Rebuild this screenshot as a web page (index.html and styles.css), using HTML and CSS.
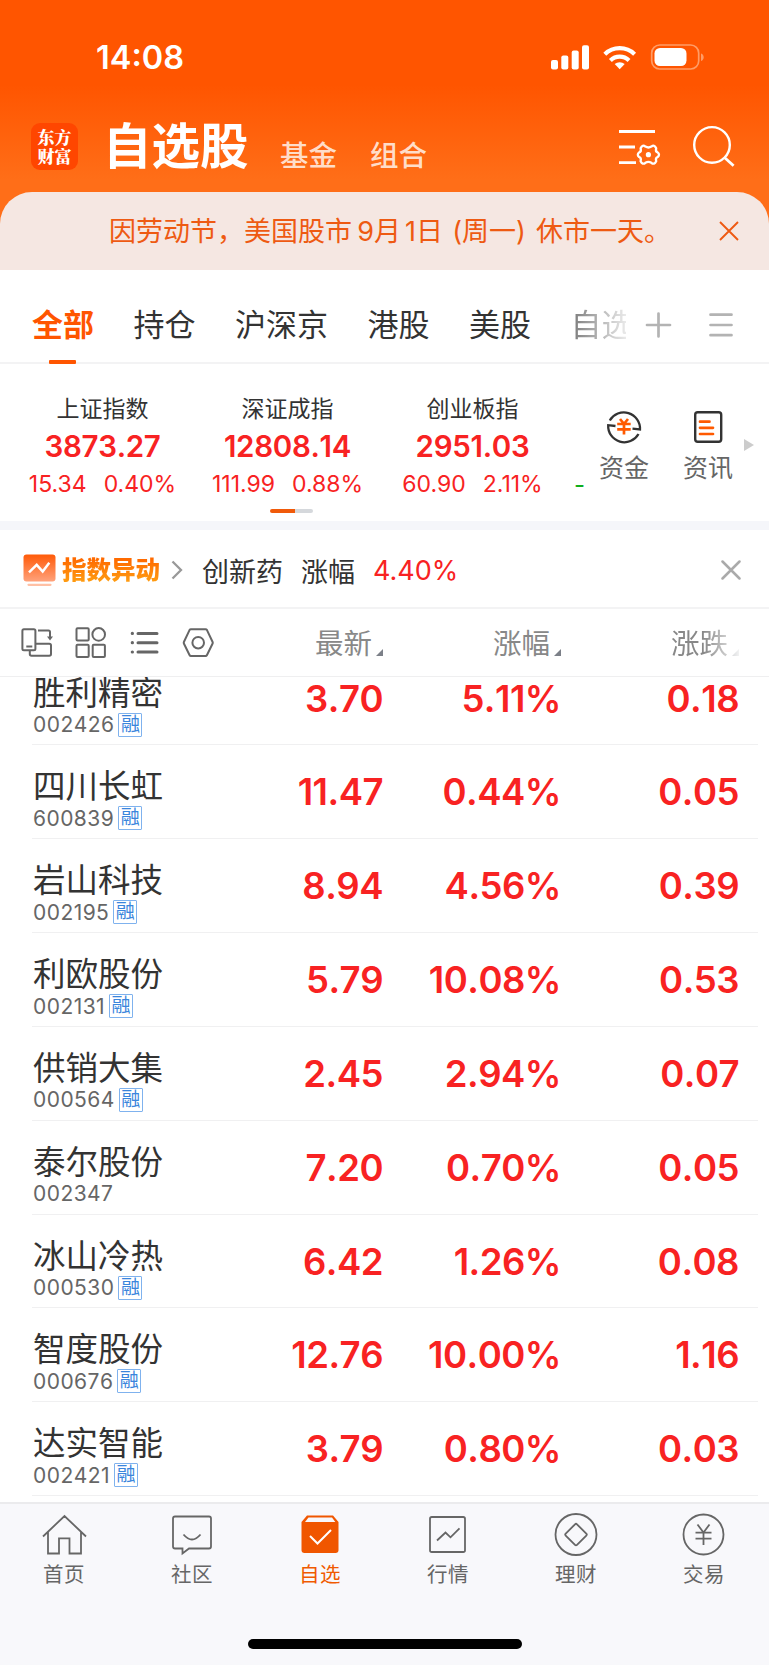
FILE: index.html
```
<!DOCTYPE html>
<html lang="zh-CN">
<head>
    <meta charset="UTF-8">
    <meta name="viewport" content="width=device-width, initial-scale=1.0">
    <title>自选股</title>
    <link rel="stylesheet" href="styles.css">
</head>
<body>
<div class="app">
    <header class="header">
        <div class="status">
            <span class="time">14:08</span>
            <svg class="status-icons" width="156" height="28" viewBox="0 0 156 28">
                <g fill="#fff">
                    <rect x="1" y="17" width="7" height="9.500" rx="2"/>
                    <rect x="11.300" y="12.500" width="7" height="14" rx="2"/>
                    <rect x="21.700" y="7.500" width="7" height="19" rx="2"/>
                    <rect x="32" y="2.200" width="7" height="24.300" rx="2"/>
                    <path d="M69.700 26.300l-5-5.200a7.500 7.500 0 0 1 10 0z"/>
                </g>
                <g fill="none" stroke="#fff" stroke-width="4.200">
                    <path d="M54.800 11.200a21.500 21.500 0 0 1 29.800 0"/>
                    <path d="M60.400 17.400a13.500 13.500 0 0 1 18.600 0"/>
                </g>
                <rect x="101.700" y="2" width="47" height="24" rx="8" fill="none" stroke="#ff9c66" stroke-width="1.700"/>
                <rect x="104.500" y="5" width="32" height="18" rx="5.500" fill="#fff"/>
                <path d="M151 10.500c3.600 1 3.600 6.500 0 7.500z" fill="#ff9c66"/>
            </svg>
        </div>
        <div class="title-bar">
            <div class="logo"><span>东方</span><span>财富</span></div>
            <h1>自选股</h1>
            <span class="sub sub-fund">基金</span>
            <span class="sub">组合</span>
            <svg class="title-icons" width="120" height="46" viewBox="0 0 120 46" fill="none" stroke="#fff">
                <path d="M2 8.500h36M2 24h16M2 39.700h17" stroke-width="2.800"/>
                <path d="M28.400 23.600Q31.400 25.400 34.400 23.600Q37.200 21.200 39.200 25.200Q38.200 28.600 40.600 29.400Q43.400 31.700 40.600 34Q38.200 34.800 39.200 38.200Q37.200 42.200 34.400 39.800Q31.400 38 28.400 39.800Q25.600 42.200 23.600 38.200Q24.600 34.800 22.200 34Q19.400 31.700 22.200 29.400Q24.600 28.600 23.600 25.200Q25.600 21.200 28.400 23.600Z" stroke-width="2.300" stroke-linejoin="round"/>
                <circle cx="31.400" cy="31.700" r="2.600" fill="#fff" stroke="none"/>
                <circle cx="95" cy="21.900" r="17.800" stroke-width="2.400"/>
                <path d="M107.200 34.300l9.400 8.500" stroke-width="2.800"/>
            </svg>
        </div>
    </header>

    <div class="notice">
        <p>因劳动节，美国股市<i class="n9">9</i>月<i class="n1">1</i>日<i class="lp">(</i>周一<i class="rp">)</i>休市一天。</p>
        <svg width="20" height="20" viewBox="0 0 20 20" stroke="#ee5a12" stroke-width="1.900"><path d="M1 1l18 18M19 1L1 19"/></svg>
    </div>

    <nav class="tabs">
        <span class="tab active">全部</span>
        <span class="tab">持仓</span>
        <span class="tab">沪深京</span>
        <span class="tab">港股</span>
        <span class="tab">美股</span>
        <span class="tab faded">自选</span>
        <svg width="90" height="26" viewBox="0 0 90 26" fill="none" stroke="#b3b3b3" stroke-width="2.700" stroke-linecap="round">
            <path d="M2 13h23M13.500 1.500v23M65.500 2.700h21M65.500 13h21M65.500 23.200h21"/>
        </svg>
    </nav>

    <section class="indices">
        <div class="index">
            <h3>上证指数</h3>
            <strong>3873.27</strong>
            <p><span>15.34</span><span>0.40%</span></p>
        </div>
        <div class="index">
            <h3>深证成指</h3>
            <strong>12808.14</strong>
            <p><span>111.99</span><span>0.88%</span></p>
        </div>
        <div class="index">
            <h3>创业板指</h3>
            <strong>2951.03</strong>
            <p><span>60.90</span><span>2.11%</span></p>
        </div>
        <div class="peek">-</div>
        <div class="tool">
            <svg width="38" height="38" viewBox="0 0 38 38" fill="none" stroke="#333" stroke-width="2.300">
                <path d="M4.800 12.500A16.200 16.200 0 0 1 35 21.500L27.500 20.700"/>
                <path d="M33.500 26A16.200 16.200 0 0 1 3.200 17.200L10.500 18"/>
                <path d="M15 11l3.700 4.500M23 11l-3.700 4.500M12.200 16h13.500M12.200 21.300h13.500M19 15.500v11" stroke="#ff5a00" stroke-width="2.700"/>
            </svg>
            <span>资金</span>
        </div>
        <div class="tool">
            <svg width="38" height="38" viewBox="0 0 38 38" fill="none" stroke="#333" stroke-width="2.400">
                <rect x="6.200" y="4.200" width="26" height="29.500" rx="2.500"/>
                <path d="M11 13.700h9.500M11 19.800h13M11 26h13" stroke="#ff5a00" stroke-width="2.700" stroke-linecap="round"/>
            </svg>
            <span>资讯</span>
        </div>
        <div class="more"></div>
        <div class="pager"></div>
    </section>

    <section class="alert">
        <svg class="alert-icon" width="34" height="34" viewBox="0 0 34 34">
            <defs>
                <linearGradient id="alertFill" x1="0" y1="0" x2="0" y2="1">
                    <stop offset="0" stop-color="#ff5a08"/>
                    <stop offset="1" stop-color="#ffa27c"/>
                </linearGradient>
            </defs>
            <rect x="1.500" y="1.500" width="32" height="27" rx="3" fill="url(#alertFill)"/>
            <path d="M7 19.300l7.700-7.500 6 6.700L27.300 9.800" fill="none" stroke="#fff" stroke-width="2.500"/>
            <path d="M6.500 31.800h22" stroke="#ffc0a4" stroke-width="2.200" stroke-linecap="round"/>
        </svg>
        <b>指数异动</b>
        <svg class="chevron" width="12" height="20" viewBox="0 0 12 20" fill="none" stroke="#999" stroke-width="2.300"><path d="M1.500 1.500L10 10l-8.500 8.500"/></svg>
        <span class="sector">创新药</span>
        <span class="label">涨幅</span>
        <span class="rate">4.40%</span>
        <svg class="close" width="20" height="20" viewBox="0 0 20 20" stroke="#aaa" stroke-width="2.500" stroke-linecap="round"><path d="M1.500 1.500l17 17M18.500 1.500l-17 17"/></svg>
    </section>

    <section class="thead">
        <svg width="194" height="34" viewBox="0 0 194 34" fill="none" stroke="#666" stroke-width="2">
            <rect x="2.400" y="3.300" width="13" height="21" rx="1.500"/>
            <path d="M6.300 20.500h6M18 4.500h10.500q1.500 0 1.500 1.500v6M9.800 25v3q0 1.700 1.700 1.700H29.300q1.700 0 1.700-1.700v-8.500q0-1.700-1.700-1.700H16"/>
            <path d="M27 10.500h6l-3 4z" fill="#666" stroke="none"/>
            <rect x="56.500" y="2.300" width="12.200" height="12.200" rx="1"/>
            <circle cx="78.700" cy="8.400" r="6.300"/>
            <rect x="56.500" y="18.700" width="12.200" height="12.200" rx="1"/>
            <rect x="72.700" y="18.700" width="12.200" height="12.200" rx="1"/>
            <path d="M118 7.400h19M118 16.700h19M118 26h19" stroke-width="3" stroke-linecap="round"/>
            <path d="M112.300 7.400h.1M112.300 16.700h.1M112.300 26h.1" stroke-width="3.200" stroke-linecap="round"/>
            <path d="M171 3.200h14.500q1 0 1.500.9l5.500 11.600q.500 1 0 2l-5.500 11.300q-.500 1-1.500 1H171q-1 0-1.500-1l-5.500-11.300q-.500-1 0-2l5.500-11.600q.500-.9 1.500-.9z"/>
            <circle cx="178.200" cy="16.700" r="5.800"/>
        </svg>
        <span class="th">最新</span>
        <span class="th">涨幅</span>
        <span class="th th-fade">涨跌</span>
    </section>

    <main class="list">
        <div class="row"><div class="stock"><h2>胜利精密</h2><p>002426<em>融</em></p></div><b>3.70</b><b>5.11%</b><b>0.18</b></div>
        <div class="row"><div class="stock"><h2>四川长虹</h2><p>600839<em>融</em></p></div><b>11.47</b><b>0.44%</b><b>0.05</b></div>
        <div class="row"><div class="stock"><h2>岩山科技</h2><p>002195<em>融</em></p></div><b>8.94</b><b>4.56%</b><b>0.39</b></div>
        <div class="row"><div class="stock"><h2>利欧股份</h2><p>002131<em>融</em></p></div><b>5.79</b><b>10.08%</b><b>0.53</b></div>
        <div class="row"><div class="stock"><h2>供销大集</h2><p>000564<em>融</em></p></div><b>2.45</b><b>2.94%</b><b>0.07</b></div>
        <div class="row"><div class="stock"><h2>泰尔股份</h2><p>002347</p></div><b>7.20</b><b>0.70%</b><b>0.05</b></div>
        <div class="row"><div class="stock"><h2>冰山冷热</h2><p>000530<em>融</em></p></div><b>6.42</b><b>1.26%</b><b>0.08</b></div>
        <div class="row"><div class="stock"><h2>智度股份</h2><p>000676<em>融</em></p></div><b>12.76</b><b>10.00%</b><b>1.16</b></div>
        <div class="row"><div class="stock"><h2>达实智能</h2><p>002421<em>融</em></p></div><b>3.79</b><b>0.80%</b><b>0.03</b></div>
    </main>

    <footer class="footer">
        <nav class="menu">
            <a class="item">
                <svg width="46" height="46" viewBox="0 0 46 46"><path d="M2 24.500L23.500 4 45 24.500M7 20v21.500h11V26.300h10.500v15.200H40V20"/></svg>
                <span>首页</span>
            </a>
            <a class="item">
                <svg width="46" height="46" viewBox="0 0 46 46"><path d="M6 4.500h34q2 0 2 2v28q0 2-2 2H20l-6.500 5v-5H6q-2 0-2-2v-28q0-2 2-2zM14.500 22.500q8.500 10 17 0"/></svg>
                <span>社区</span>
            </a>
            <a class="item active">
                <svg width="46" height="46" viewBox="0 0 46 46">
                    <path class="solid" d="M10 3.500h26l5.500 6.500v28q0 3-3 3h-31q-3 0-3-3V10z"/>
                    <path class="cut" d="M11.500 5.500h23.500l3.300 4.500H8z"/>
                    <path class="check" d="M13 24l7.500 7.500L34 18"/>
                </svg>
                <span>自选</span>
            </a>
            <a class="item">
                <svg width="46" height="46" viewBox="0 0 46 46"><rect x="5" y="5" width="35" height="35" rx="1.800"/><path d="M12 28.500l8.500-8 5 4.800 9-9"/></svg>
                <span>行情</span>
            </a>
            <a class="item">
                <svg width="46" height="46" viewBox="0 0 46 46"><circle cx="23" cy="22.500" r="20.500"/><path d="M22 12.300q1-1 2 0l9.300 9.300q1 1 0 2L24 32.900q-1 1-2 0l-9.300-9.300q-1-1 0-2z"/></svg>
                <span>理财</span>
            </a>
            <a class="item">
                <svg width="46" height="46" viewBox="0 0 46 46"><circle cx="22.500" cy="22.500" r="20"/><path d="M16.500 12.500l6 8 6-8M14.500 20.700h16M14.500 26.700h16M22.500 20.500V33"/></svg>
                <span>交易</span>
            </a>
        </nav>
        <div class="home-bar"></div>
    </footer>
</div>
</body>
</html>
```
FILE: styles.css
```
* {
    box-sizing: border-box;
    margin: 0;
    padding: 0;
}
body {
    font-family: Inter, "Noto Sans CJK SC", sans-serif;
    font-weight: 400;
    color: #333;
    background: #fff;
}
svg {
    display: block;
    flex: none;
}
.app {
    width: 769px;
    height: 1665px;
    display: flex;
    flex-direction: column;
    overflow: hidden;
    background: linear-gradient(#ff5500 0, #ff5500 85px, #ff6e18 180px, #ff6e18 240px, #fff 240px);
}

/* header */
.header {
    height: 192px;
    flex: none;
    color: #fff;
}
.status {
    height: 115px;
    display: flex;
    justify-content: space-between;
    padding: 43px 63px 0 96px;
}
.time {
    font-size: 32.500px;
    font-weight: 600;
    line-height: 30px;
}
.title-bar {
    height: 77px;
    display: flex;
    align-items: flex-start;
    padding-left: 31px;
}
.logo {
    width: 47px;
    height: 47px;
    flex: none;
    margin: 8px 26px 0 0;
    padding-top: 4px;
    border-radius: 9px;
    background: #ff4600;
    font-family: "Noto Serif CJK SC", "Noto Sans CJK SC", serif;
    font-weight: 900;
    font-size: 17px;
    text-align: center;
}
.logo span {
    display: block;
    line-height: 19px;
}
.title-bar h1 {
    padding-top: 1px;
    font-size: 48.500px;
    line-height: 62px;
    font-weight: 700;
    width: 177px;
    flex: none;
    margin-left: -1px;
}
.sub {
    width: 90px;
    flex: none;
    padding-top: 21px;
    font-size: 28.500px;
    line-height: 40px;
    font-weight: 500;
    color: #ffddc9;
}
.title-icons {
    margin: 8px 0 0 157px;
}

/* notice */
.notice {
    height: 78px;
    flex: none;
    display: flex;
    align-items: center;
    justify-content: space-between;
    padding: 0 30px 0 109px;
    border-radius: 32px 32px 0 0;
    background: #f5e7e2;
    color: #ee5a12;
}
.notice p {
    display: flex;
    padding-top: 2px;
    font-size: 27px;
    line-height: 40px;
}
.notice i {
    font-style: normal;
    text-align: right;
}
.n9 {
    width: 22px;
}
.n1 {
    width: 15px;
}
.lp {
    width: 19px;
}
.notice .rp {
    width: 20px;
    text-align: left;
}

/* tabs */
.tabs {
    height: 94px;
    flex: none;
    display: flex;
    align-items: center;
    padding: 18px 0 0 32px;
    background: #fff;
    border-bottom: 2px solid #f3f3f4;
}
.tab {
    position: relative;
    flex: none;
    margin-right: 39.500px;
    font-size: 31px;
    line-height: 44px;
    white-space: nowrap;
}
.tab.active {
    color: #ff5500;
    font-weight: 700;
}
.tab.active::after {
    content: "";
    position: absolute;
    left: 17px;
    bottom: -17px;
    width: 27px;
    height: 4px;
    border-radius: 1px;
    background: #ff5500;
}
.tab.faded {
    width: 55px;
    margin-right: 19px;
    overflow: hidden;
    -webkit-mask-image: linear-gradient(90deg, rgba(0, 0, 0, .65), rgba(0, 0, 0, .1));
    mask-image: linear-gradient(90deg, rgba(0, 0, 0, .65), rgba(0, 0, 0, .1));
}

/* indices */
.indices {
    position: relative;
    height: 166px;
    flex: none;
    display: flex;
    padding-left: 10px;
    background: #fff;
    border-bottom: 9px solid #f5f6fa;
}
.index {
    width: 185px;
    flex: none;
    padding-top: 28px;
    text-align: center;
    color: #f82222;
}
.index h3 {
    font-size: 23px;
    line-height: 34px;
    font-weight: 400;
    color: #333;
}
.index strong {
    display: block;
    font-size: 29.500px;
    line-height: 40px;
    font-weight: 600;
    font-kerning: none;
    letter-spacing: -0.300px;
}
.index p {
    display: flex;
    justify-content: center;
    gap: 17px;
    font-size: 23px;
    line-height: 37px;
}
.peek {
    width: 17px;
    flex: none;
    padding: 102px 0 0 9px;
    font-size: 24px;
    line-height: 37px;
    color: #0fae1c;
}
.tool {
    width: 84px;
    flex: none;
    margin-top: 44px;
    display: flex;
    flex-direction: column;
    align-items: center;
    font-size: 25px;
    color: #666;
}
.tool span {
    margin-top: 5px;
    line-height: 34px;
}
.more {
    margin: 75px 0 0 -6px;
    width: 10px;
    height: 12px;
    background: #ccc;
    clip-path: polygon(0 0, 100% 50%, 0 100%);
}
.pager {
    position: absolute;
    left: 270px;
    top: 145px;
    width: 43px;
    height: 4px;
    border-radius: 2px;
    background: linear-gradient(90deg, #f05a0a 25px, #d5d8dc 25px);
}

/* alert */
.alert {
    height: 79px;
    flex: none;
    display: flex;
    align-items: center;
    padding: 2px 28px 0 22px;
    background: #fff;
    border-bottom: 2px solid #f3f3f4;
    font-size: 27px;
}
.alert b {
    margin-left: 6px;
    width: 109px;
    font-size: 24.500px;
    font-weight: 900;
    line-height: 36px;
    background: linear-gradient(#ff6a00 20%, #ff9a10 80%);
    -webkit-background-clip: text;
    background-clip: text;
    color: transparent;
}
.alert span {
    padding-top: 1px;
}
.sector {
    margin-left: 19px;
}
.label {
    margin-left: 18px;
}
.rate {
    margin-left: 18px;
    color: #f82222;
}
.close {
    margin-left: auto;
}

/* table head */
.thead {
    height: 68px;
    flex: none;
    display: flex;
    align-items: center;
    padding-left: 20px;
    background: #fff;
    border-bottom: 1px solid #efeff0;
}
.th {
    width: 178px;
    display: flex;
    justify-content: flex-end;
    padding-top: 3px;
    font-size: 28.500px;
    line-height: 40px;
    color: #888;
}
.thead .th:nth-of-type(1) {
    width: 169px;
}
.th::after {
    content: "";
    width: 7px;
    height: 7px;
    margin: 25px 0 0 4px;
    background: #7c8088;
    clip-path: polygon(100% 0, 100% 100%, 0 100%);
}
.th-fade {
    -webkit-mask-image: linear-gradient(90deg, #000 80%, rgba(0, 0, 0, .1));
    mask-image: linear-gradient(90deg, #000 80%, rgba(0, 0, 0, .1));
}

/* stock list */
.list {
    height: 825px;
    flex: none;
    display: flex;
    flex-direction: column;
    justify-content: flex-end;
    padding: 0 11px 6px 32px;
    background: #fff;
    overflow: hidden;
}
.row {
    height: 93.830px;
    flex: none;
    display: flex;
    padding-left: 1px;
    border-bottom: 1px solid #f0f0f1;
}
.row b {
    width: 178px;
    padding-top: 25px;
    text-align: right;
    font-size: 36.500px;
    line-height: 45px;
    font-weight: 600;
    font-kerning: none;
    letter-spacing: -0.500px;
    color: #f82222;
}
.stock {
    width: 172px;
}
.stock h2 {
    padding-top: 20px;
    font-size: 32.500px;
    line-height: 44px;
    font-weight: 400;
    white-space: nowrap;
}
.stock p {
    display: flex;
    align-items: center;
    height: 24px;
    margin-top: -3px;
    font-size: 21px;
    font-kerning: none;
    letter-spacing: 0.450px;
    color: #666;
}
.stock em {
    width: 24px;
    height: 24px;
    margin-left: 4px;
    border: 1px solid #7fb2ee;
    border-radius: 1px;
    font-style: normal;
    font-size: 19px;
    line-height: 22px;
    letter-spacing: 0;
    text-align: center;
    color: #3a85dc;
}

/* footer */
.footer {
    height: 163px;
    flex: none;
    background: #f8f8fb;
    border-top: 2px solid #ebebed;
}
.menu {
    display: flex;
    height: 135px;
}
.item {
    width: 128px;
    padding-top: 8px;
    display: flex;
    flex-direction: column;
    align-items: center;
    font-size: 20.500px;
    color: #666;
}
.item svg {
    fill: none;
    stroke: #666;
    stroke-width: 1.800;
}
.item span {
    margin-top: 2px;
    line-height: 30px;
    letter-spacing: 0.500px;
}
.item.active {
    color: #f05a00;
}
.item .solid {
    fill: #f05600;
    stroke: none;
}
.item .cut {
    fill: #f8f8fb;
    stroke: none;
}
.item .check {
    stroke: #fff;
    stroke-width: 2;
}
.home-bar {
    width: 274px;
    height: 10px;
    margin: 0 auto;
    border-radius: 5px;
    background: #000;
}
```
